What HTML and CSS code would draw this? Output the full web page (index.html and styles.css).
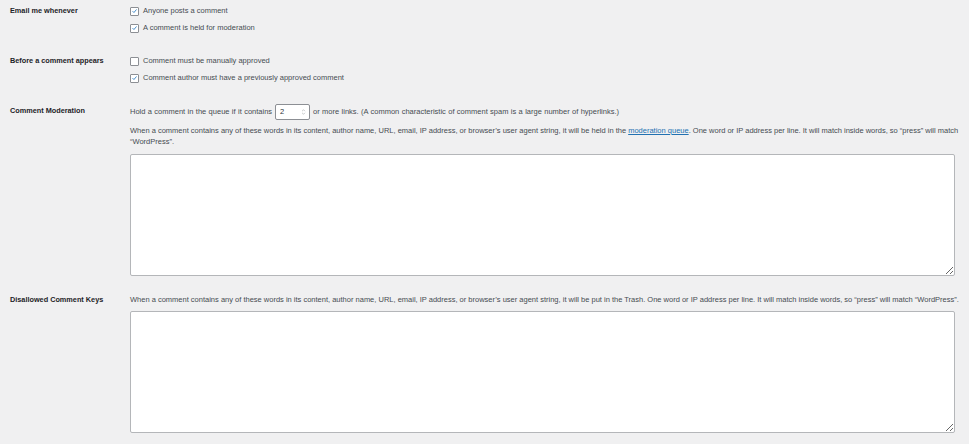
FILE: index.html
```html
<!DOCTYPE html>
<html lang="en">
<head>
<meta charset="utf-8">
<title>Discussion Settings</title>
<link rel="stylesheet" href="styles.css">
</head>
<body>
<div class="form">
  <div class="row row-email">
    <div class="label">Email me whenever</div>
    <div class="field">
      <div class="check-line"><span class="cb checked"><svg viewBox="0 0 10 10"><path d="M2.2 5.2 L4.2 7.2 L7.9 2.8" /></svg></span>Anyone posts a comment</div>
      <div class="check-line"><span class="cb checked"><svg viewBox="0 0 10 10"><path d="M2.2 5.2 L4.2 7.2 L7.9 2.8" /></svg></span>A comment is held for moderation</div>
    </div>
  </div>
  <div class="row row-before">
    <div class="label">Before a comment appears</div>
    <div class="field">
      <div class="check-line"><span class="cb"></span>Comment must be manually approved</div>
      <div class="check-line"><span class="cb checked"><svg viewBox="0 0 10 10"><path d="M2.2 5.2 L4.2 7.2 L7.9 2.8" /></svg></span>Comment author must have a previously approved comment</div>
    </div>
  </div>
  <div class="row row-moderation">
    <div class="label">Comment Moderation</div>
    <div class="field">
      <div class="hold-line">Hold a comment in the queue if it contains <span class="num-input"><span class="num-val">2</span><span class="spin"><svg viewBox="0 0 6 10"><path d="M1.2 4 L3 2.2 L4.8 4 M1.2 6 L3 7.8 L4.8 6" /></svg></span></span> or more links. (A common characteristic of comment spam is a large number of hyperlinks.)</div>
      <p class="desc"><span>When a comment contains any of these words in its content, author name, URL, email, IP address, or browser’s user agent string, it will be held in the</span> <a href="#">moderation queue</a><span>. One word or IP address per line. It will match inside words, so “press” will match</span><br><span>“WordPress”.</span></p>
      <textarea class="big-text"></textarea>
    </div>
  </div>
  <div class="row row-disallowed">
    <div class="label">Disallowed Comment Keys</div>
    <div class="field">
      <p class="desc single">When a comment contains any of these words in its content, author name, URL, email, IP address, or browser’s user agent string, it will be put in the Trash. One word or IP address per line. It will match inside words, so “press” will match “WordPress”.</p>
      <textarea class="big-text"></textarea>
    </div>
  </div>
</div>
</body>
</html>
```

FILE: styles.css
```css
html, body {
  margin: 0;
  padding: 0;
  background: #f0f0f1;
}
body {
  font-family: "Liberation Sans", Arial, sans-serif;
  font-size: 7.5px;
  line-height: 10px;
  color: #464c52;
  width: 969px;
  height: 444px;
  overflow: hidden;
}
.form {
  padding: 0 6px 0 10px;
}
.row {
  display: flex;
}
.label {
  width: 120px;
  flex: none;
  font-weight: bold;
  font-size: 7.3px;
  color: #1d2327;
}
.field {
  flex: 1;
  min-width: 0;
}
.row-email { padding-top: 6px; }
.row-before { padding-top: 23px; }
.row-moderation { padding-top: 21px; }
.row-moderation .label { padding-top: 2px; }
.row-disallowed { padding-top: 19px; }

.check-line {
  display: flex;
  align-items: center;
  height: 10px;
}
.check-line + .check-line { margin-top: 7px; }
.cb {
  width: 9px;
  height: 9px;
  box-sizing: border-box;
  border: 1px solid #8c8f94;
  border-radius: 1px;
  background: #fff;
  margin-right: 4px;
  flex: none;
  display: flex;
  align-items: center;
  justify-content: center;
}
.cb svg {
  width: 8px;
  height: 8px;
  fill: none;
  stroke: #3582c4;
  stroke-width: 1.3;
}

.hold-line {
  display: flex;
  align-items: center;
  height: 16px;
  white-space: nowrap;
  word-spacing: 0.3px;
}
.num-input {
  display: inline-flex;
  align-items: center;
  justify-content: space-between;
  width: 35px;
  height: 16px;
  box-sizing: border-box;
  border: 1px solid #8c8f94;
  border-radius: 2px;
  background: #fff;
  margin: 0 3px;
  padding: 0 3px 0 4px;
  color: #2c3338;
  word-spacing: 0;
}
.spin svg {
  width: 5px;
  height: 8px;
  display: block;
  fill: none;
  stroke: #a7aaad;
  stroke-width: 0.8;
}
.desc {
  margin: 5px 0 0;
  line-height: 11px;
}
.desc a {
  color: #2271b1;
  text-decoration: underline;
}
.desc.single {
  margin: 0;
  line-height: 10px;
  white-space: nowrap;
}
.big-text {
  display: block;
  width: 825px;
  height: 122px;
  box-sizing: border-box;
  margin: 7px 0 0;
  border: 1px solid #b4b6b9;
  border-radius: 2px;
  background: #fff;
  resize: vertical;
  padding: 2px 4px;
  font: inherit;
}
.row-disallowed .big-text { margin-top: 6px; }
```
